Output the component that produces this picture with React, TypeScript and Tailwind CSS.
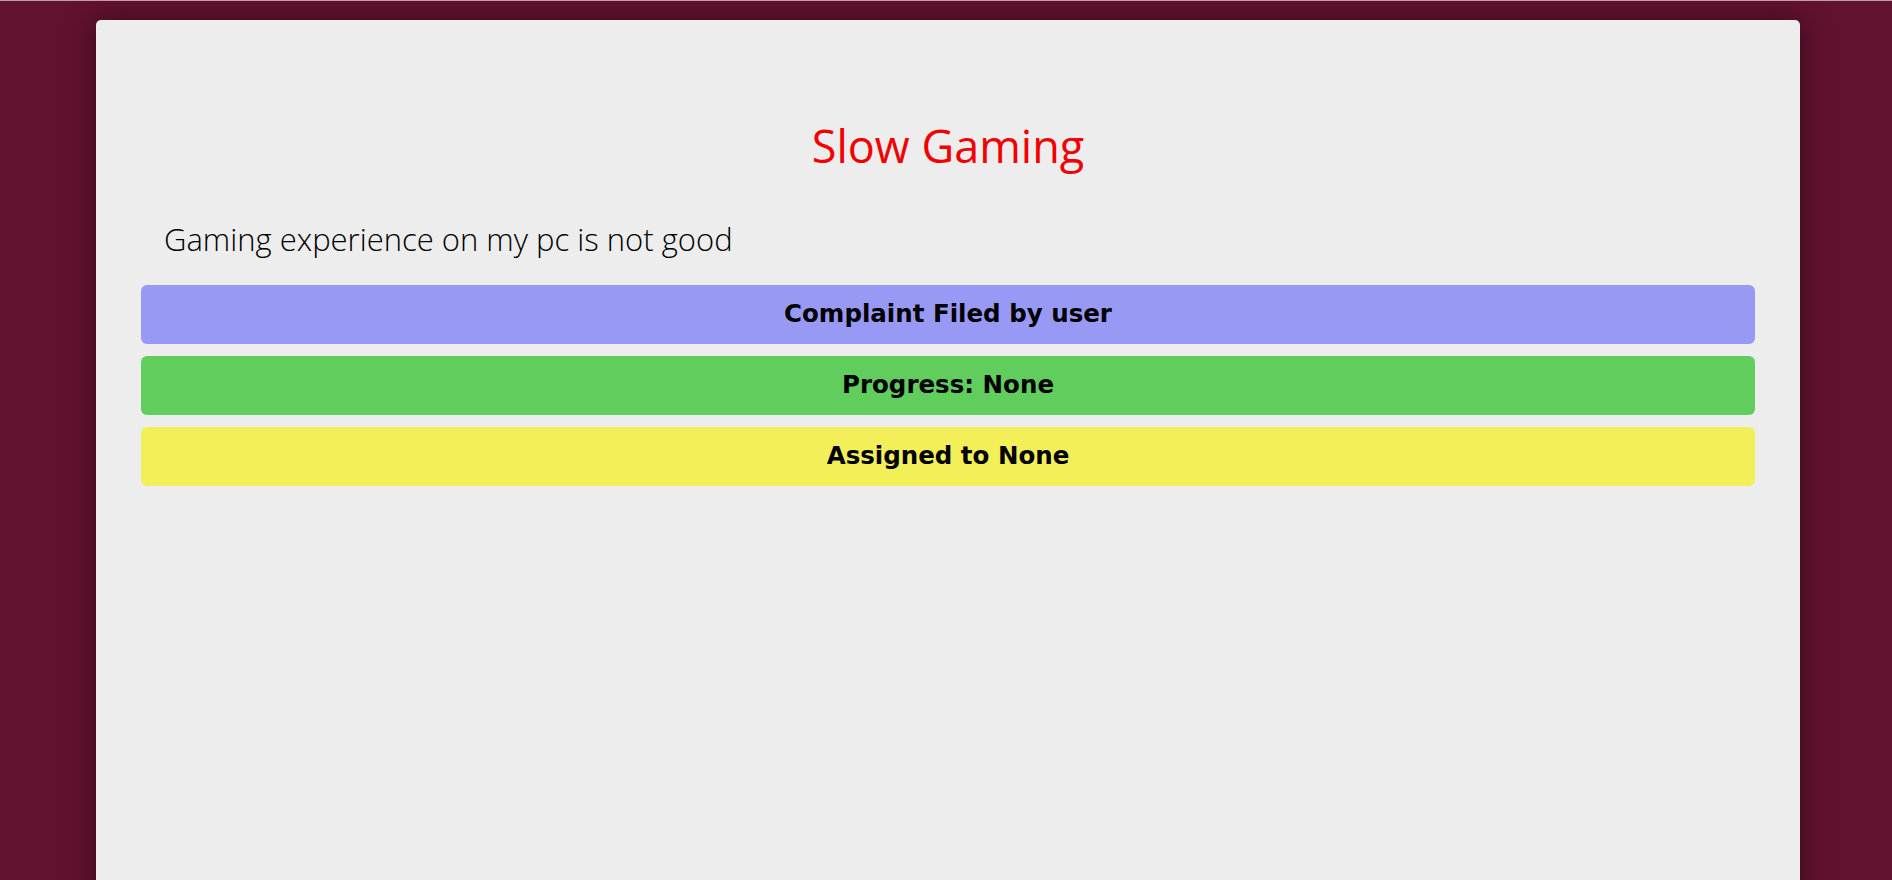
const rows = [
  { label: "Complaint Filed by user", color: "bg-[#9899f5]" },
  { label: "Progress: None", color: "bg-[#61cd5d]" },
  { label: "Assigned to None", color: "bg-[#f3ef58]" },
];

const App = () => {
  return (
    <div className="h-screen overflow-hidden border-t border-[#c79aab] bg-[#621231]">
      {/* Card */}
      <div className="mt-[19px] ml-[96px] h-[900px] w-[1704px] rounded-[5px] bg-[#ededed] pt-[92px] shadow-[0_0_28px_rgba(20,0,8,0.55)]">
        <h1 className="text-center font-['Open_Sans',sans-serif] text-[45px] leading-normal text-[#f20000]">
          Slow Gaming
        </h1>

        <p className="mt-[36px] pl-[68px] font-['Open_Sans',sans-serif] text-[31px] font-light leading-normal text-black">
          Gaming experience on my pc is not good
        </p>

        {/* Status bars */}
        <div className="mt-[23px] flex flex-col gap-3 px-[45px]">
          {rows.map((row) => (
            <div
              key={row.label}
              className={`flex h-[59px] items-center justify-center rounded-md ${row.color}`}
            >
              <span className="font-['DejaVu_Sans',sans-serif] text-[24.5px] font-bold text-black">
                {row.label}
              </span>
            </div>
          ))}
        </div>
      </div>
    </div>
  );
};

export default App;
